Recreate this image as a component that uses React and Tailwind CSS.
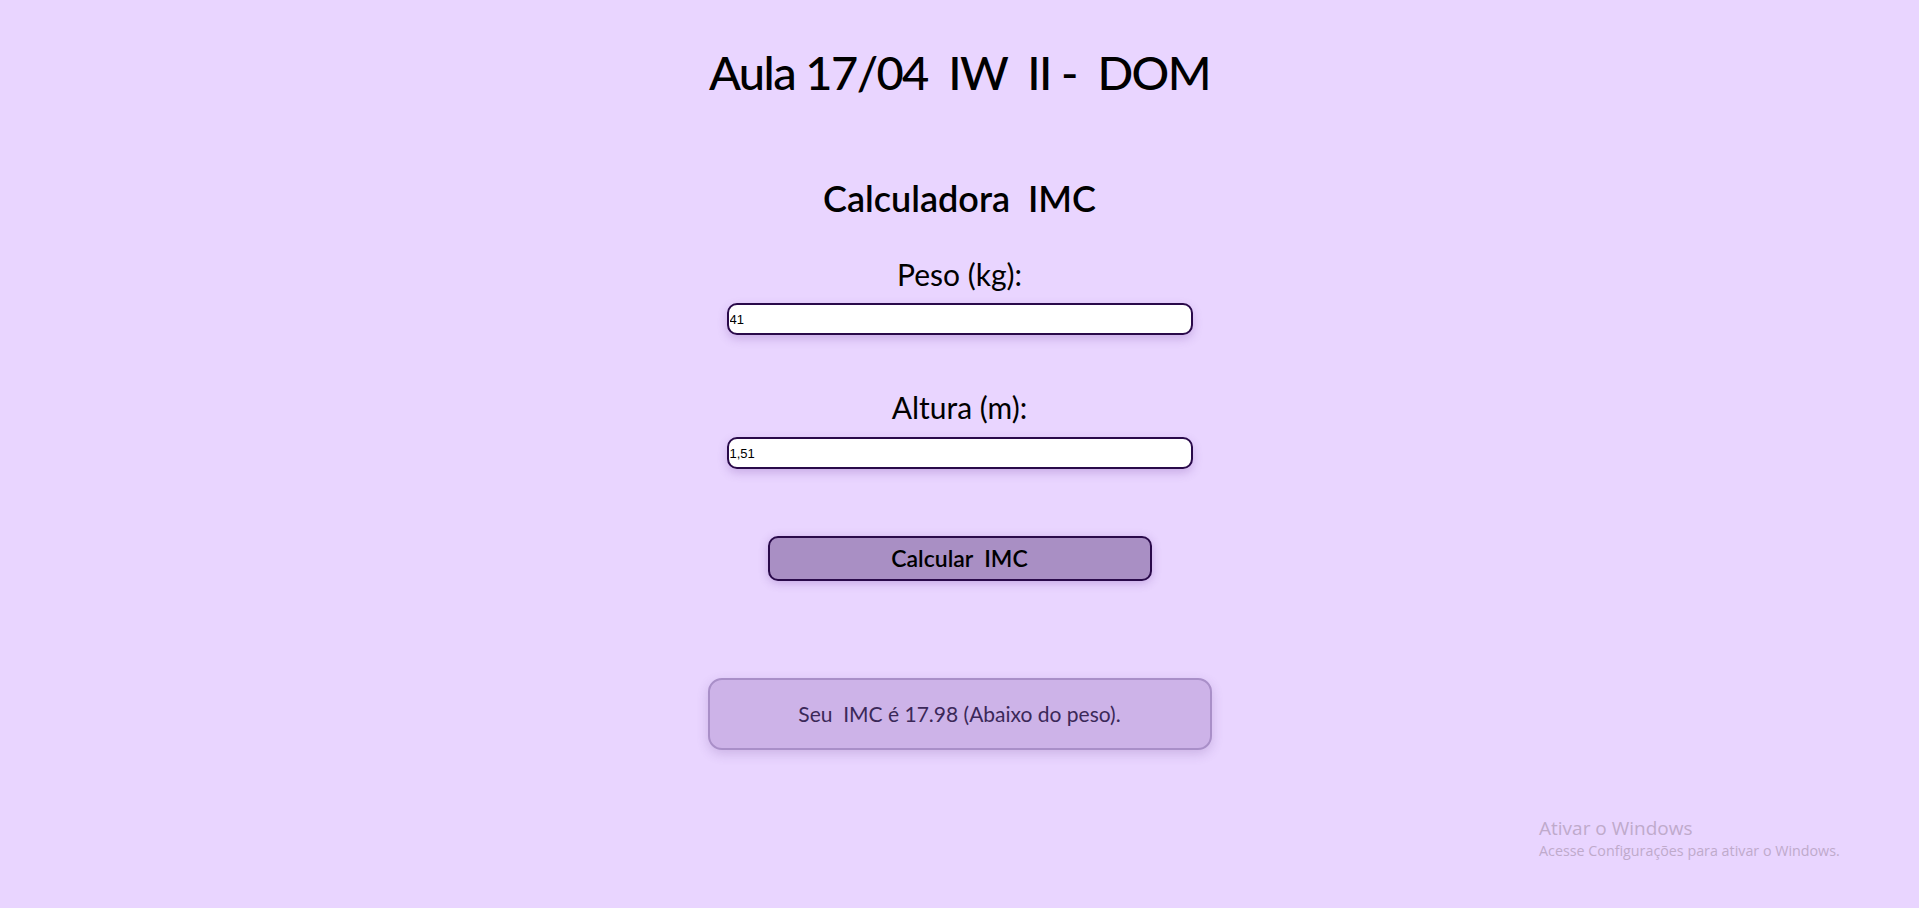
export default function App() {
  const font = "font-['Lato','Noto_Sans',sans-serif]";
  return (
    <div className={`relative min-h-screen w-full bg-[#e9d5ff] flex flex-col items-center text-black ${font}`} style={{ minHeight: 908 }}>
      <h1 className="mt-[44px] text-[47px] leading-[56px] font-medium tracking-[-1.6px] whitespace-pre">Aula 17/04  IW  II -  DOM</h1>
      <h2 className="mt-[76px] text-[36px] leading-[44px] font-semibold whitespace-pre">Calculadora  IMC</h2>
      <label className="mt-[36px] text-[30px] leading-[36px] font-normal">Peso (kg):</label>
      <input
        defaultValue="41"
        className="mt-[11px] w-[466px] h-[32px] rounded-[10px] border-2 border-[#2a0a4a] bg-white px-[1px] text-[13px] font-['Liberation_Sans',Arial,sans-serif] text-black outline-none shadow-[0_4px_10px_rgba(110,60,160,0.25)]"
      />
      <label className="mt-[54px] text-[30px] leading-[36px] font-normal">Altura (m):</label>
      <input
        defaultValue="1,51"
        className="mt-[12px] w-[466px] h-[32px] rounded-[10px] border-2 border-[#2a0a4a] bg-white px-[1px] text-[13px] font-['Liberation_Sans',Arial,sans-serif] text-black outline-none shadow-[0_4px_10px_rgba(110,60,160,0.25)]"
      />
      <button className="mt-[67px] w-[384px] h-[45px] rounded-[10px] border-2 border-[#2a0a4a] bg-[#a98fc4] text-[23px] font-semibold text-black whitespace-pre shadow-[0_2px_10px_rgba(110,60,160,0.3)]">
        Calcular  IMC
      </button>
      <div className="mt-[97px] w-[504px] h-[72px] rounded-[14px] border-2 border-[#a98fc8] bg-[#cdb3e8] flex items-center justify-center text-[21px] text-[#3b2858] whitespace-pre shadow-[0_4px_12px_rgba(90,50,130,0.2)]">
        Seu  IMC é 17.98 (Abaixo do peso).
      </div>
      <div className="absolute left-[1539px] top-[817px] font-['Open_Sans',sans-serif] text-[#bfaacb]">
        <div className="text-[19px] leading-[23px]">Ativar o Windows</div>
        <div className="text-[14.3px] leading-[19px] mt-[1px]">Acesse Configurações para ativar o Windows.</div>
      </div>
    </div>
  );
}
